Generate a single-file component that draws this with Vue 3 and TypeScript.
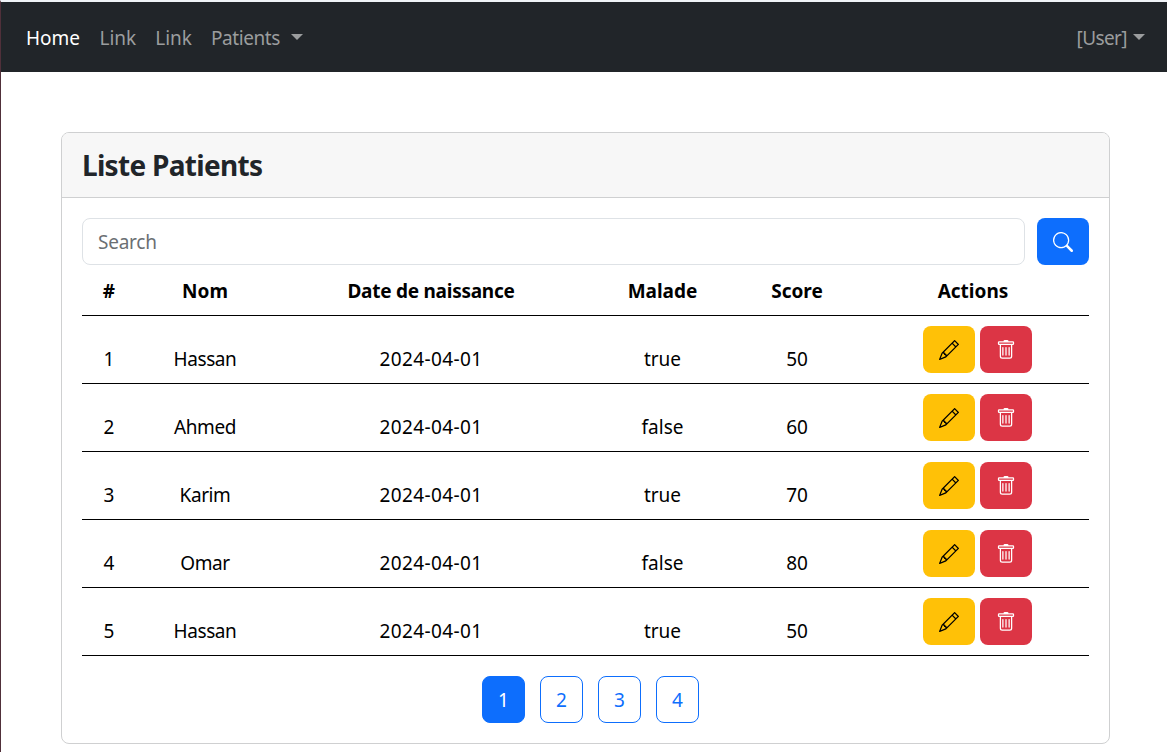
<script setup lang="ts">
interface Patient {
  id: number
  name: string
  birth: string
  sick: boolean
  score: number
}

const patients: Patient[] = [
  { id: 1, name: 'Hassan', birth: '2024-04-01', sick: true, score: 50 },
  { id: 2, name: 'Ahmed', birth: '2024-04-01', sick: false, score: 60 },
  { id: 3, name: 'Karim', birth: '2024-04-01', sick: true, score: 70 },
  { id: 4, name: 'Omar', birth: '2024-04-01', sick: false, score: 80 },
  { id: 5, name: 'Hassan', birth: '2024-04-01', sick: true, score: 50 },
]
const pages: number[] = [1, 2, 3, 4]
const currentPage = 1
</script>

<template>
  <div class="page">
    <nav class="navbar">
      <a class="link active home">Home</a>
      <a class="link short">Link</a>
      <a class="link short">Link</a>
      <a class="link patients"><span>Patients</span><i class="caret"></i></a>
      <a class="link user"><span>[User]</span><i class="caret"></i></a>
    </nav>
    <main class="card">
      <header class="card-header"><h1>Liste Patients</h1></header>
      <div class="card-body">
        <form class="search" @submit.prevent>
          <input type="text" placeholder="Search" />
          <button class="btn primary" type="submit" aria-label="Search">
            <svg viewBox="0 0 16 16"><path d="M11.742 10.344a6.5 6.5 0 1 0-1.397 1.398h-.001q.044.06.098.115l3.85 3.85a1 1 0 0 0 1.415-1.414l-3.85-3.85a1 1 0 0 0-.115-.1zM12 6.5a5.5 5.5 0 1 1-11 0 5.5 5.5 0 0 1 11 0" /></svg>
          </button>
        </form>
        <table>
          <colgroup>
            <col class="c-id" /><col class="c-name" /><col class="c-date" /><col class="c-sick" /><col class="c-score" /><col class="c-act" />
          </colgroup>
          <thead>
            <tr><th>#</th><th>Nom</th><th class="birth-head">Date de naissance</th><th>Malade</th><th>Score</th><th>Actions</th></tr>
          </thead>
          <tbody>
            <tr v-for="p in patients" :key="p.id">
              <td>{{ p.id }}</td>
              <td class="name">{{ p.name }}</td>
              <td class="date">{{ p.birth }}</td>
              <td>{{ p.sick }}</td>
              <td>{{ p.score }}</td>
              <td class="actions">
                <div class="buttons">
                  <button class="btn warning" aria-label="Edit">
                    <svg viewBox="0 0 16 16"><path d="M12.146.146a.5.5 0 0 1 .708 0l3 3a.5.5 0 0 1 0 .708l-10 10a.5.5 0 0 1-.168.11l-5 2a.5.5 0 0 1-.65-.65l2-5a.5.5 0 0 1 .11-.168zM11.207 2.5 13.5 4.793 14.793 3.5 12.5 1.207zm1.586 3L10.5 3.207 4 9.707V10h.5a.5.5 0 0 1 .5.5v.5h.5a.5.5 0 0 1 .5.5v.5h.293zm-9.761 5.175-.106.106-1.528 3.821 3.821-1.528.106-.106A.5.5 0 0 1 5 12.5V12h-.5a.5.5 0 0 1-.5-.5V11h-.5a.5.5 0 0 1-.468-.325" /></svg>
                  </button>
                  <button class="btn danger" aria-label="Delete">
                    <svg viewBox="0 0 16 16"><path d="M5.5 5.5A.5.5 0 0 1 6 6v6a.5.5 0 0 1-1 0V6a.5.5 0 0 1 .5-.5m2.5 0a.5.5 0 0 1 .5.5v6a.5.5 0 0 1-1 0V6a.5.5 0 0 1 .5-.5m3 .5a.5.5 0 0 0-1 0v6a.5.5 0 0 0 1 0z" /><path d="M14.5 3a1 1 0 0 1-1 1H13v9a2 2 0 0 1-2 2H5a2 2 0 0 1-2-2V4h-.5a1 1 0 0 1-1-1V2a1 1 0 0 1 1-1H6a1 1 0 0 1 1-1h2a1 1 0 0 1 1 1h3.5a1 1 0 0 1 1 1zM4.118 4 4 4.059V13a1 1 0 0 0 1 1h6a1 1 0 0 0 1-1V4.059L11.882 4zM2.5 3h11V2h-11z" /></svg>
                  </button>
                </div>
              </td>
            </tr>
          </tbody>
        </table>
        <div class="pager">
          <a v-for="n in pages" :key="n" class="page-link" :class="{ current: n === currentPage }">{{ n }}</a>
        </div>
      </div>
    </main>
  </div>
</template>

<style>
body {
  margin: 0;
  overflow: hidden;
  background: #fff;
}
</style>

<style scoped>
* {
  box-sizing: border-box;
}
.page {
  height: 752px;
  border-top: 2px solid #f0f3f7;
  border-left: 1px solid #50303a;
  font-family: "Segoe UI", "Noto Sans", "Open Sans", sans-serif;
  font-size: 19px;
  line-height: 30px;
  color: #212529;
}
.navbar {
  display: flex;
  align-items: center;
  height: 70px;
  padding: 2px 22px 0 25px;
  background: #212529;
}
.link {
  display: flex;
  align-items: center;
  margin-right: 20px;
  color: #9b9d9e;
  white-space: nowrap;
}
.link.active {
  color: #fff;
}
.home {
  width: 53.5px;
}
.short {
  width: 35.7px;
}
.patients {
  letter-spacing: -0.4px;
}
.user {
  margin: 0 0 0 auto;
  letter-spacing: -0.6px;
}
.caret {
  border: 6px solid transparent;
  border-top-color: currentColor;
  border-bottom: 0;
  margin: 0 0 3px 11px;
}
.user .caret {
  margin-left: 6px;
}
.card {
  width: 1049px;
  height: 612px;
  margin: 60px 0 0 60px;
  border: 1px solid #cfd0d1;
  border-radius: 8px;
}
.card-header {
  height: 65px;
  padding: 15px 20px;
  background: #f7f7f7;
  border-bottom: 1px solid #cfd0d1;
  border-radius: 7px 7px 0 0;
}
h1 {
  margin: 0;
  font-size: 28px;
  line-height: 35px;
  font-weight: 700;
  letter-spacing: -0.7px;
}
.card-body {
  padding: 20px;
}
.search {
  display: flex;
  gap: 12px;
}
input {
  flex: 1;
  height: 47px;
  padding: 0 15px;
  border: 1px solid #dee2e6;
  border-radius: 8px;
  font: inherit;
  letter-spacing: -0.25px;
}
input::placeholder {
  color: #6b6f73;
  opacity: 1;
}
.btn {
  display: flex;
  align-items: center;
  justify-content: center;
  width: 52px;
  height: 47px;
  padding: 0;
  border: 0;
  border-radius: 8px;
}
.btn svg {
  width: 20px;
  height: 20px;
  fill: currentColor;
}
.primary {
  color: #fff;
  background: #0d6efd;
}
.warning {
  color: #000;
  background: #ffc107;
}
.danger {
  color: #fff;
  background: #dc3545;
}
table {
  width: 1007px;
  table-layout: fixed;
  border-collapse: separate;
  border-spacing: 0;
  color: #000;
  text-align: center;
}
.c-id { width: 54px; }
.c-name { width: 138px; }
.c-date { width: 314px; }
.c-sick { width: 149px; }
.c-score { width: 120px; }
.c-act { width: 232px; }
th, td {
  padding: 0;
  border-bottom: 1px solid #000;
}
th {
  height: 51px;
  padding-top: 2px;
  font-weight: 700;
}
.birth-head {
  letter-spacing: -0.25px;
}
td {
  height: 68px;
  padding-top: 18px;
}
.name {
  letter-spacing: -0.4px;
}
.date {
  letter-spacing: 0.4px;
}
td.actions {
  padding-top: 0;
}
.buttons {
  display: flex;
  justify-content: center;
  gap: 5px;
  margin-left: 9px;
}
.pager {
  display: flex;
  justify-content: center;
  gap: 15px;
  margin-top: 20px;
  padding-left: 10px;
}
.page-link {
  display: flex;
  align-items: center;
  justify-content: center;
  width: 43px;
  height: 47px;
  border: 1px solid #0d6efd;
  border-radius: 8px;
  color: #0d6efd;
}
.page-link.current {
  background: #0d6efd;
  color: #fff;
}
</style>
